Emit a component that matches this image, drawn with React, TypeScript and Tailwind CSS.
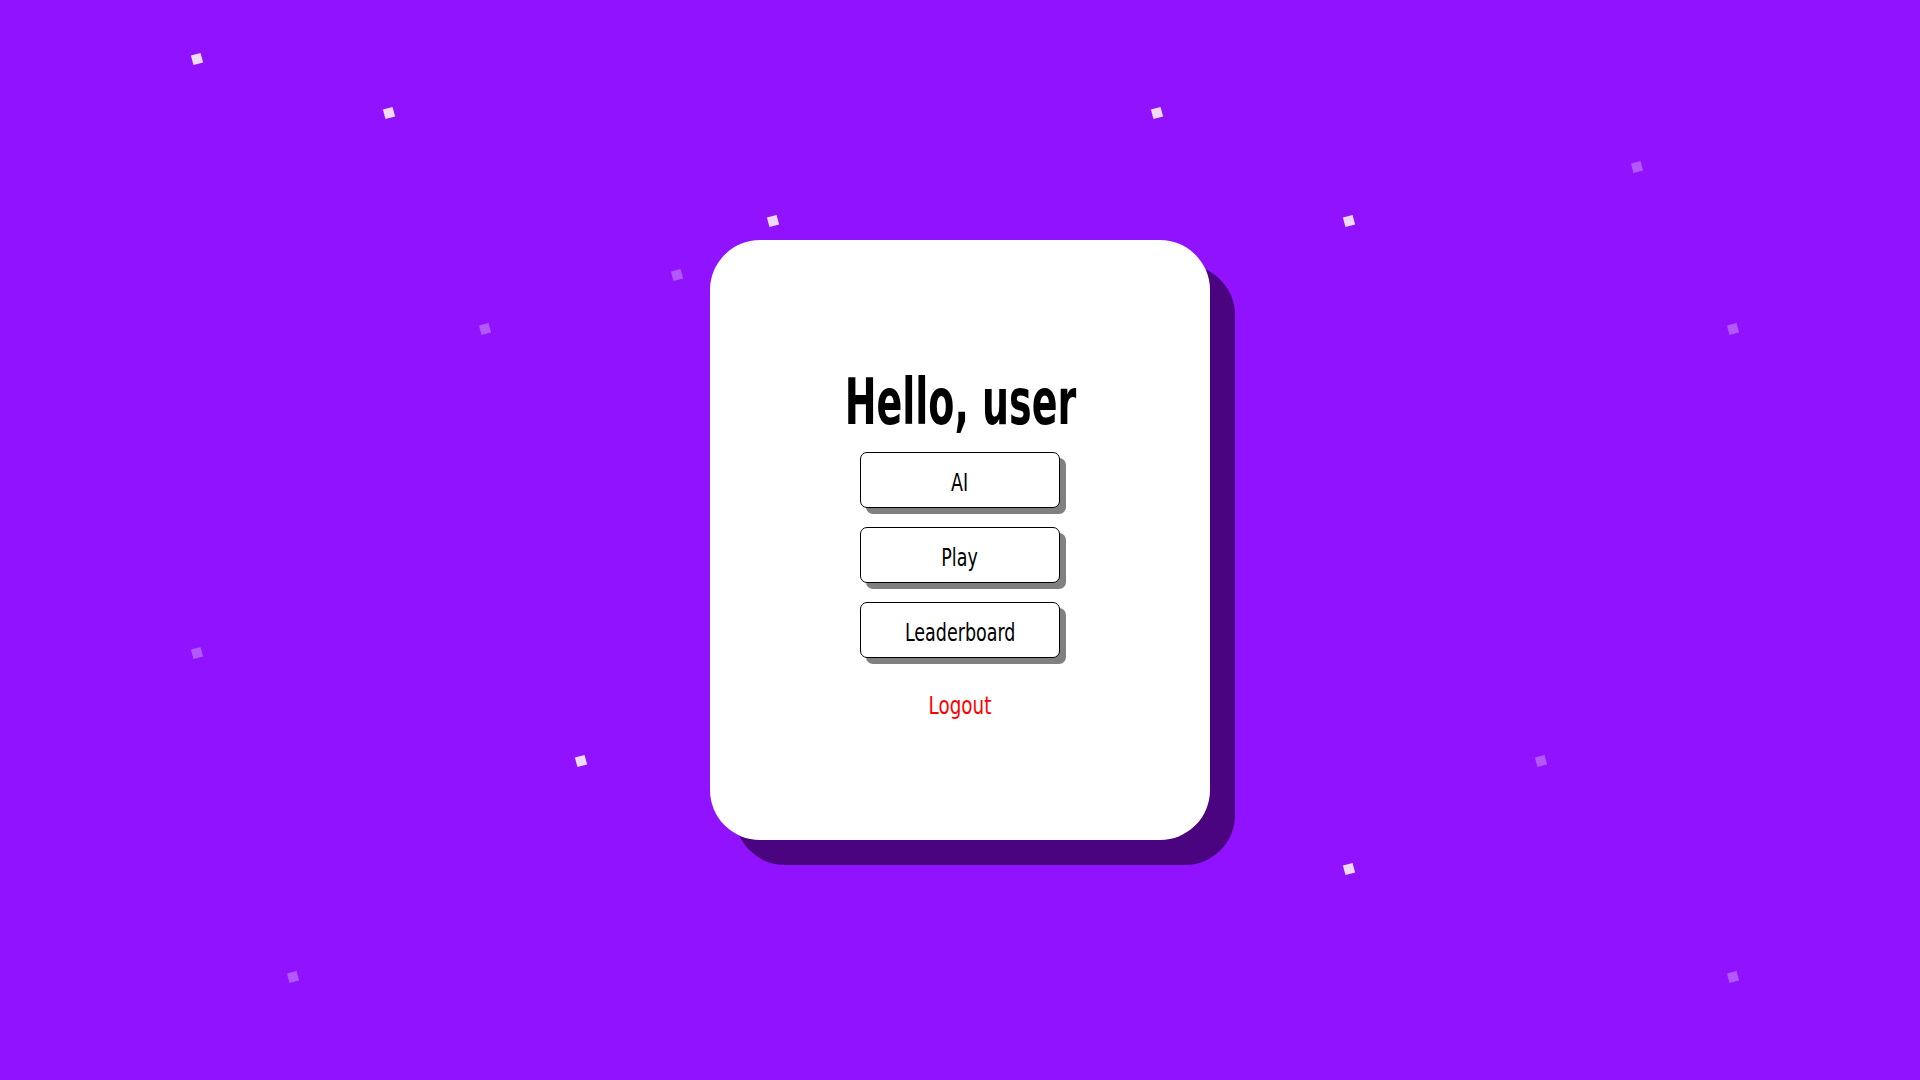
import React from "react";

const dots: { x: number; y: number; bright: boolean }[] = [
  { x: 10, y: 5, bright: true },
  { x: 20, y: 10, bright: true },
  { x: 40, y: 20, bright: true },
  { x: 60, y: 10, bright: true },
  { x: 70, y: 20, bright: true },
  { x: 30, y: 70, bright: true },
  { x: 70, y: 80, bright: true },
  { x: 85, y: 15, bright: false },
  { x: 35, y: 25, bright: false },
  { x: 25, y: 30, bright: false },
  { x: 90, y: 30, bright: false },
  { x: 10, y: 60, bright: false },
  { x: 80, y: 70, bright: false },
  { x: 15, y: 90, bright: false },
  { x: 90, y: 90, bright: false },
];

const font = { fontFamily: '"DejaVu Sans Condensed", "Liberation Sans", sans-serif' };

function MenuButton({ label }: { label: string }) {
  return (
    <button
      className="w-[200px] h-[56px] pt-[5px] bg-white border border-black rounded-[7px] shadow-[6px_6px_0_#808080] text-[24px] text-black flex items-center justify-center"
      style={font}
    >
      <span className="inline-block scale-x-[0.81]">{label}</span>
    </button>
  );
}

export default function App() {
  return (
    <div className="relative w-full h-screen overflow-hidden bg-[#9012fe] flex items-center justify-center">
      {dots.map((d, i) => (
        <div
          key={i}
          className={`absolute w-[10px] h-[10px] rotate-[-15deg] ${d.bright ? "bg-white/85" : "bg-white/30"}`}
          style={{ left: `${d.x}%`, top: `${d.y}%` }}
        />
      ))}
      <div className="relative w-[500px] h-[600px] pt-[8px] bg-white rounded-[50px] shadow-[25px_25px_0_#4a0480] flex flex-col items-center justify-center">
        <h1 className="text-[64px] font-bold leading-none text-black mb-[18px] whitespace-nowrap" style={font}>
          <span className="inline-block scale-x-[0.66]">Hello, user</span>
        </h1>
        <div className="flex flex-col gap-[19px]">
          <MenuButton label="AI" />
          <MenuButton label="Play" />
          <MenuButton label="Leaderboard" />
        </div>
        <button className="mt-[36px] text-[24px] text-[#ff0000] leading-none" style={font}>
          <span className="inline-block scale-x-[0.85]">Logout</span>
        </button>
      </div>
    </div>
  );
}
